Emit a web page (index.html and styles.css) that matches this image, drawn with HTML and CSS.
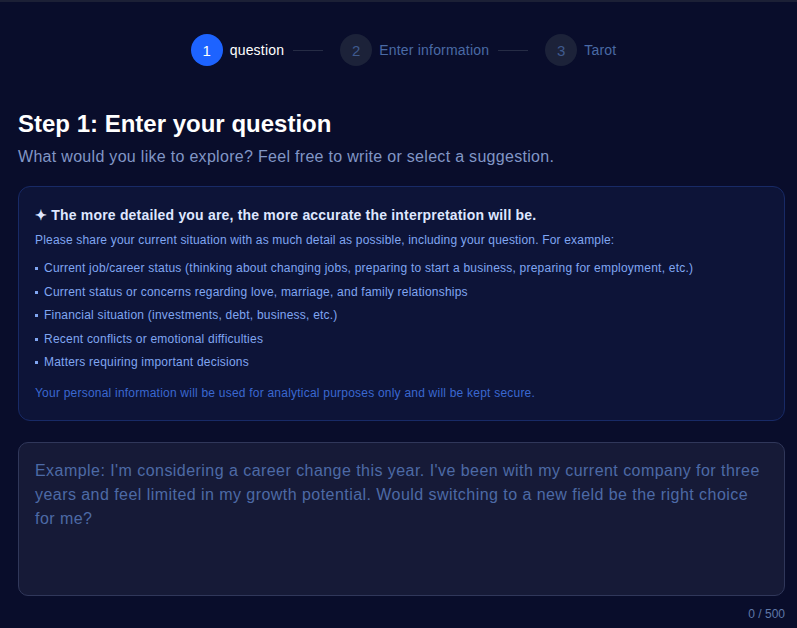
FILE: index.html
```html
<!DOCTYPE html>
<html lang="en">
<head>
<meta charset="utf-8">
<title>Step 1</title>
<link rel="stylesheet" href="styles.css">
</head>
<body>
<div class="topline"></div>
<main class="page">
  <nav class="stepper">
    <div class="step active"><span class="num">1</span><span class="label">question</span></div>
    <span class="sep"></span>
    <div class="step"><span class="num">2</span><span class="label">Enter information</span></div>
    <span class="sep"></span>
    <div class="step"><span class="num">3</span><span class="label">Tarot</span></div>
  </nav>

  <h1 class="title">Step 1: Enter your question</h1>
  <p class="subtitle">What would you like to explore? Feel free to write or select a suggestion.</p>

  <section class="tips">
    <h2 class="tips-title">✦ The more detailed you are, the more accurate the interpretation will be.</h2>
    <p class="tips-intro">Please share your current situation with as much detail as possible, including your question. For example:</p>
    <ul class="tips-list">
      <li>Current job/career status (thinking about changing jobs, preparing to start a business, preparing for employment, etc.)</li>
      <li>Current status or concerns regarding love, marriage, and family relationships</li>
      <li>Financial situation (investments, debt, business, etc.)</li>
      <li>Recent conflicts or emotional difficulties</li>
      <li>Matters requiring important decisions</li>
    </ul>
    <p class="tips-note">Your personal information will be used for analytical purposes only and will be kept secure.</p>
  </section>

  <textarea class="question" placeholder="Example: I'm considering a career change this year. I've been with my current company for three years and feel limited in my growth potential. Would switching to a new field be the right choice for me?"></textarea>
  <div class="counter">0 / 500</div>
</main>
</body>
</html>
```

FILE: styles.css
```css
* { box-sizing: border-box; }
html, body {
  margin: 0;
  padding: 0;
  background: #090d2b;
  font-family: "Liberation Sans", "Noto Sans CJK KR", sans-serif;
  color: #ffffff;
}
.topline {
  height: 2px;
  background: #1c2036;
}
.page {
  padding: 32px 12px 0 18px;
  display: flex;
  flex-direction: column;
}
.stepper {
  display: flex;
  align-items: center;
  justify-content: center;
  padding-left: 4px;
  height: 32px;
}
.step {
  display: flex;
  align-items: center;
  gap: 7px;
}
.num {
  width: 32px;
  height: 32px;
  border-radius: 50%;
  background: #1c2239;
  color: #3f5a8e;
  display: flex;
  align-items: center;
  justify-content: center;
  font-size: 15px;
}
.label {
  font-size: 14px;
  letter-spacing: 0.2px;
  color: #4a6aa5;
}
.step.active .num {
  background: #1d63ff;
  color: #ffffff;
}
.step.active .label {
  color: #ffffff;
}
.sep {
  width: 30px;
  height: 1px;
  background: #262c45;
  margin: 0 17px 0 9px;
}
.title {
  margin: 42px 0 0;
  font-size: 24px;
  line-height: 32px;
  font-weight: 700;
  color: #ffffff;
}
.subtitle {
  margin: 5px 0 0;
  font-size: 16px;
  line-height: 24px;
  letter-spacing: 0.3px;
  color: #8196c6;
}
.tips {
  margin-top: 17px;
  border: 1px solid #182a66;
  background: #0d1438;
  border-radius: 12px;
  padding: 18px 16px 18px 16px;
}
.tips-title {
  margin: 0;
  font-size: 14px;
  line-height: 20px;
  font-weight: 700;
  letter-spacing: 0.19px;
  color: #dfe7ff;
}
.tips-intro {
  margin: 6px 0 0;
  font-size: 12px;
  line-height: 18px;
  letter-spacing: 0.18px;
  color: #80a6f2;
}
.tips-list {
  list-style: none;
  margin: 8px 0 0;
  padding: 0;
}
.tips-list li {
  font-size: 12px;
  line-height: 23.5px;
  letter-spacing: 0.22px;
  color: #80a6f2;
}
.tips-list li::before {
  content: "";
  display: inline-block;
  width: 3px;
  height: 3px;
  background: #80a6f2;
  margin-right: 6px;
  vertical-align: middle;
}
.tips-note {
  margin: 9px 0 0;
  font-size: 12px;
  line-height: 18px;
  letter-spacing: 0.22px;
  color: #3b68d0;
}
.question {
  margin-top: 21px;
  height: 154px;
  width: 100%;
  resize: none;
  background: #161a37;
  border: 1px solid #30375a;
  border-radius: 10px;
  padding: 16px 16px;
  font-family: inherit;
  font-size: 16px;
  line-height: 24px;
  letter-spacing: 0.45px;
  color: #ffffff;
  outline: none;
}
.question::placeholder {
  color: #4d6aa6;
  opacity: 1;
}
.counter {
  margin-top: 10px;
  text-align: right;
  font-size: 12px;
  line-height: 16px;
  color: #5f78a8;
}
```
